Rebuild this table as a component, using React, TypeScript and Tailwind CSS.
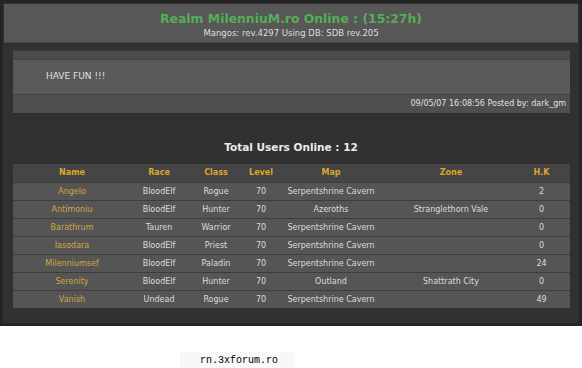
const ROWS = [
  { name: "Angelo", race: "BloodElf", cls: "Rogue", level: 70, map: "Serpentshrine Cavern", zone: "", hk: 2 },
  { name: "Antimoniu", race: "BloodElf", cls: "Hunter", level: 70, map: "Azeroths", zone: "Stranglethorn Vale", hk: 0 },
  { name: "Barathrum", race: "Tauren", cls: "Warrior", level: 70, map: "Serpentshrine Cavern", zone: "", hk: 0 },
  { name: "Iasodara", race: "BloodElf", cls: "Priest", level: 70, map: "Serpentshrine Cavern", zone: "", hk: 0 },
  { name: "Milenniumsef", race: "BloodElf", cls: "Paladin", level: 70, map: "Serpentshrine Cavern", zone: "", hk: 24 },
  { name: "Serenity", race: "BloodElf", cls: "Hunter", level: 70, map: "Outland", zone: "Shattrath City", hk: 0 },
  { name: "Vanish", race: "Undead", cls: "Rogue", level: 70, map: "Serpentshrine Cavern", zone: "", hk: 49 },
];

const COLS = ["Name", "Race", "Class", "Level", "Map", "Zone", "H.K"];
const WIDTHS = ["w-[118px]", "w-[56px]", "w-[58px]", "w-[32px]", "w-[108px]", "w-[132px]", "w-[49px]"];

export default function App() {
  return (
    <div className="w-[582px] h-[368px] bg-white font-['DejaVu_Sans',sans-serif]">
      <div className="h-[326px] border-[3px] border-[#242424] bg-[#313131] flex flex-col">
        {/* header */}
        <div className="mx-px mt-px h-[39px] bg-[#575757] border-b border-[#4a4a4a] flex flex-col items-center">
          <div className="mt-[6px] text-[12.4px] leading-[18px] font-bold text-[#55ad55]">
            Realm MilenniuM.ro Online : (15:27h)
          </div>
          <div className="text-[8.5px] leading-[11px] text-[#dedede]">
            Mangos: rev.4297 Using DB: SDB rev.205
          </div>
        </div>

        {/* news box */}
        <div className="mt-[7px] ml-[10px] mr-[9px] border-t border-[#3a3a3a]">
          <div className="h-[9px] bg-[#4b4b4b] border-b border-[#444]" />
          <div className="h-[35px] bg-[#595959] border-b border-[#444] flex items-center pl-[33px] text-[9px] text-[#e0e0e0]">
            HAVE FUN !!!
          </div>
          <div className="h-[18px] bg-[#4f4f4f] flex items-center justify-end pr-[4px] text-[8px] text-[#e0e0e0]">
            09/05/07 16:08:56 Posted by: dark_gm
          </div>
        </div>

        {/* users online */}
        <div className="mt-[27px] text-center text-[10.5px] leading-[14px] font-bold text-[#ececec]">
          Total Users Online : 12
        </div>

        <div className="mt-[10px] ml-[10px] mr-[9px]">
          <div className="flex h-[18px] bg-[#454545] items-center">
            {COLS.map((c, i) => (
              <div key={c} className={`${WIDTHS[i]} text-center text-[8px] font-bold text-[#d9a72a]`}>
                {c}
              </div>
            ))}
          </div>
          {ROWS.map((r) => (
            <div key={r.name} className="flex h-[18px] bg-[#555] border-t border-[#3d3d3d] items-center text-[8px] text-[#dcdcdc]">
              <div className={`${WIDTHS[0]} text-center text-[#d2a640]`}>{r.name}</div>
              <div className={`${WIDTHS[1]} text-center`}>{r.race}</div>
              <div className={`${WIDTHS[2]} text-center`}>{r.cls}</div>
              <div className={`${WIDTHS[3]} text-center`}>{r.level}</div>
              <div className={`${WIDTHS[4]} text-center`}>{r.map}</div>
              <div className={`${WIDTHS[5]} text-center`}>{r.zone}</div>
              <div className={`${WIDTHS[6]} text-center`}>{r.hk}</div>
            </div>
          ))}
        </div>
      </div>

      {/* footer link */}
      <div className="flex mt-[26px] ml-[180px]">
        <div className="w-[115px] h-[18px] bg-[#f8f8f8] pl-[20px] font-['Liberation_Mono',monospace] text-[10px] leading-[18px] text-black">
          rn.3xforum.ro
        </div>
      </div>
    </div>
  );
}
